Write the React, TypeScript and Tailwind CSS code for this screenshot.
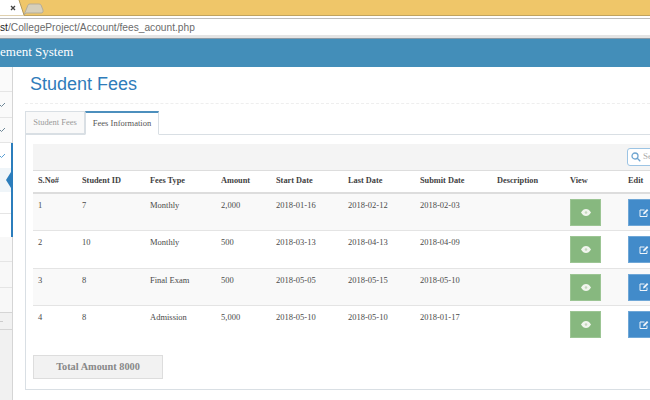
const rows = [
  ["1", "7", "Monthly", "2,000", "2018-01-16", "2018-02-12", "2018-02-03"],
  ["2", "10", "Monthly", "500", "2018-03-13", "2018-04-13", "2018-04-09"],
  ["3", "8", "Final Exam", "500", "2018-05-05", "2018-05-15", "2018-05-10"],
  ["4", "8", "Admission", "5,000", "2018-05-10", "2018-05-10", "2018-01-17"],
];
const heads = ["S.No#", "Student ID", "Fees Type", "Amount", "Start Date", "Last Date", "Submit Date", "Description", "View", "Edit"];
const widths = ["w-[44px]", "w-[68px]", "w-[71px]", "w-[55px]", "w-[72px]", "w-[72px]", "w-[77px]", "w-[73px]", "w-[58px]", "w-[60px]"];

function Check({ color }: { color: string }) {
  return (
    <svg width="6" height="6" viewBox="0 0 6 6" fill="none" stroke={color} strokeWidth="1">
      <path d="M0 3l1.500 1.500L5 1" />
    </svg>
  );
}

function Eye() {
  return (
    <svg width="10" height="7" viewBox="0 0 10 7">
      <path d="M0 3.500C1.500 1 3 0 5 0S8.500 1 10 3.500C8.500 6 7 7 5 7S1.500 6 0 3.500z" fill="#f1f5ee" />
      <circle cx="5" cy="3.500" r="1.300" fill="#c5d8bd" />
    </svg>
  );
}

function Edit() {
  return (
    <svg width="10" height="10" viewBox="0 0 10 10" fill="none" stroke="#eef4fa" strokeWidth="1">
      <path d="M8 5.500V8.500H1V2h4.500" />
      <path d="M4 6.500L4.500 4.500 8 1 9.300 2.300 5.800 6z" fill="#eef4fa" stroke="none" />
    </svg>
  );
}

export default function App() {
  return (
    <div className="w-[650px] h-[400px] overflow-hidden flex flex-col bg-white font-['Liberation_Serif',serif]">
      <div className="h-[16px] shrink-0 bg-[#efc669] border-b border-[#c0a35f] relative">
        <svg className="absolute left-0 top-0" width="46" height="16" viewBox="0 0 46 16">
          <path d="M24 15L28 5Q28.500 4 30 4H39Q40.500 4 41 5L43 10Q43.500 12 42 13H26z" fill="#d6cfba" stroke="#b5ad98" strokeWidth="1" />
          <path d="M0 0H19L24 15.500H0z" fill="#ffffff" />
          <path d="M19 0L24 15" stroke="#b39a5e" strokeWidth="1" fill="none" />
          <path d="M11 6l4 4M15 6l-4 4" stroke="#444444" strokeWidth="1.300" fill="none" />
        </svg>
      </div>
      <div className="h-[2px] shrink-0 bg-white"></div>
      <div className="h-[17px] shrink-0 border-t border-[#bdbdbd] bg-white text-[10.200px] leading-[18px] text-[#6b6b6b] font-['Liberation_Sans',sans-serif] whitespace-nowrap">
        <span className="text-[#222]">st</span>/CollegeProject/Account/fees_acount.php
      </div>
      <div className="h-[4px] shrink-0 bg-[#e4e4e4] border-b border-[#8a9aa6]"></div>
      <div className="h-[28px] shrink-0 bg-[#438eb9] text-white text-[13px] leading-[26px] whitespace-nowrap">
        ement System
      </div>
      <div className="flex-1 flex min-h-0">
        <aside className="w-[13px] shrink-0 border-r border-[#d5d5d5] bg-[#f1f1f1] flex flex-col">
          <div className="h-[25px] shrink-0 bg-[#fafafa] border-b border-[#e5e5e5]"></div>
          <div className="h-[26px] shrink-0 bg-[#fafafa] border-b border-[#e5e5e5] flex items-center"><Check color="#6e8797" /></div>
          <div className="h-[25px] shrink-0 bg-[#fafafa] border-b border-[#e5e5e5] flex items-center"><Check color="#6e8797" /></div>
          <div className="h-[94px] shrink-0 bg-white border-r-2 border-[#2b7dbc] flex flex-col -mr-px">
            <div className="h-[25px] shrink-0 flex items-center"><Check color="#5a9fd4" /></div>
            <div className="h-[24px] shrink-0 bg-[#eff5f9] relative">
              <svg className="absolute right-0 top-[4px]" width="5" height="16" viewBox="0 0 5 16"><path d="M5 0L0 8l5 8z" fill="#2b7dbc" /></svg>
            </div>
            <div className="h-[22px] shrink-0 border-b border-[#e5e5e5]"></div>
          </div>
          <div className="h-[25px] shrink-0 bg-[#f8f8f8] border-b border-[#e5e5e5]"></div>
          <div className="h-[26px] shrink-0 bg-[#f8f8f8] border-b border-[#e5e5e5]"></div>
          <div className="h-[25px] shrink-0 bg-[#f8f8f8] border-b border-[#d5d5d5]"></div>
          <div className="h-[17px] shrink-0 border-b border-[#d5d5d5] flex items-center"><div className="w-[3px] h-px bg-[#cccccc]"></div></div>
        </aside>
        <main className="flex-1 min-w-0 pl-[12px] pt-[5px]">
          <div className="h-[32px] border-b border-dashed border-[#eeeeee] pl-[5px] text-[18px] leading-[24px] text-[#2f7cba] font-['Liberation_Sans',sans-serif] whitespace-nowrap">
            Student Fees
          </div>
          <div className="mt-[7px] flex h-[24px] relative z-10">
            <div className="w-[60px] h-[23px] bg-[#f9f9f9] border border-[#d9dfe4] text-[#999] text-[8.500px] leading-[21px] text-center whitespace-nowrap">Student Fees</div>
            <div className="w-[74px] h-[24px] bg-white border border-[#d9dfe4] border-b-white border-t-2 border-t-[#4c8fbd] text-[#555] text-[8.500px] leading-[21px] text-center whitespace-nowrap">Fees Information</div>
          </div>
          <div className="border border-[#d9dfe4] -mt-px h-[256px] w-[700px] pl-[7px] pt-[9px]">
            <div className="h-[27px] bg-[#f4f4f4] border-b border-[#dddddd] w-[660px] flex items-center pl-[594px]">
              <div className="h-[18px] w-[60px] shrink-0 bg-white border border-[#9cc4e4] rounded-[3px] flex items-center pl-[3px] gap-[2px] text-[9px] text-[#aaa] whitespace-nowrap">
                <svg width="10" height="10" viewBox="0 0 10 10" fill="none" stroke="#6fa5d0" strokeWidth="1.300"><circle cx="4" cy="4" r="3" /><path d="M6.300 6.300L9.300 9.300" /></svg>
                Search
              </div>
            </div>
            <table className="table-fixed w-[650px] border-collapse text-[8.500px] text-[#333]">
              <thead>
                <tr className="h-[22px] border-b-2 border-[#dddddd]">
                  {heads.map((h, i) => (
                    <th key={h} className={`${widths[i]} pl-[5px] text-left font-bold text-[8.300px] text-[#3f3f3f] whitespace-nowrap`}>{h}</th>
                  ))}
                </tr>
              </thead>
              <tbody>
                {rows.map((r, i) => (
                  <tr key={r[0]} className={`h-[37.500px] align-top ${i % 2 === 0 ? "bg-[#f9f9f9]" : "bg-white"} ${i === 3 ? "" : "border-b border-[#e4e4e4]"}`}>
                    {r.map((c, j) => (
                      <td key={j} className="pl-[5px] pt-[5px] leading-[12px] text-[#4a4a4a] whitespace-nowrap">{c}</td>
                    ))}
                    <td></td>
                    <td className="pl-[5px] pt-[5px]">
                      <div className="w-[31px] h-[27px] bg-[#87b87f] border border-[#9cc594] flex items-center justify-center"><Eye /></div>
                    </td>
                    <td className="pl-[5px] pt-[5px]">
                      <div className="w-[31px] h-[27px] bg-[#428bca] border border-[#6fa7d7] flex items-center justify-center"><Edit /></div>
                    </td>
                  </tr>
                ))}
              </tbody>
            </table>
            <div className="mt-[12px] w-[130px] h-[24px] bg-[#f2f2f2] border border-[#dddddd] text-[#888] text-[10.300px] font-bold leading-[22px] text-center whitespace-nowrap">
              Total Amount 8000
            </div>
          </div>
        </main>
      </div>
    </div>
  );
}
